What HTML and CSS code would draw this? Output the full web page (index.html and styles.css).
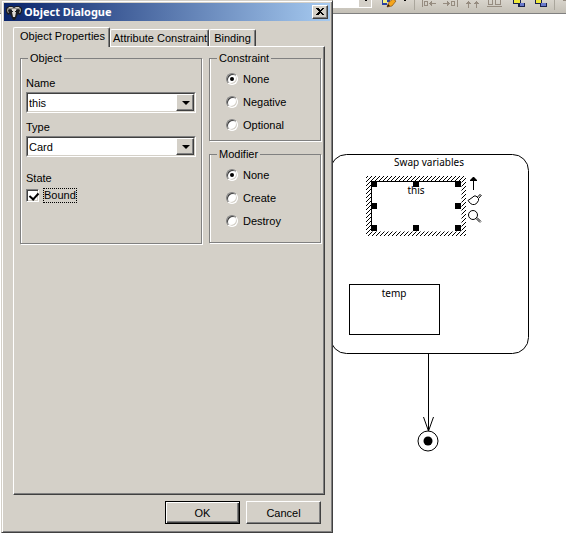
FILE: index.html
```html
<!DOCTYPE html>
<html lang="en">
<head>
<meta charset="utf-8">
<title>Object Dialogue</title>
<link rel="stylesheet" href="styles.css">
</head>
<body>
<main class="workspace">
  <div class="toolbar">
    <svg width="206" height="12" viewBox="0 0 206 12" aria-hidden="true" shape-rendering="crispEdges">
      <path d="M-30 0h42v8h-42z" fill="#fff"/><path d="M-1 0h12v7H-1z" fill="#d4d0c8"/><path d="M4 0h3l-1 1H5z"/>
      <path d="M22 0h8v2h-3v3h-5z" fill="#2840a0"/><path d="M23 0h4v3h-4z" fill="#f4f080"/>
      <g shape-rendering="auto"><path d="M27 7l2-5 4-3 3 2-4 5z" fill="#f5a51d" stroke="#70400a" stroke-width=".6"/><path d="M27 7l1-3 2 2z" fill="#301808"/></g>
      <path d="M43 0h3l-1 1h-1z"/>
      <path d="M54.500 0v10M194.500 0v10" stroke="#aaa69c"/>
      <g fill="none" stroke="#968c80">
        <path d="M62.500 0v7M64.500 1.500h3v4h-3zM69 3.500h7M71.500 1v5M70.500 2v3"/>
        <path d="M97.500 0v7M91.500 1.500h3v4h-3zM83 3.500h7M87.500 1v5M88.500 2v3"/>
        <path d="M108.500 1v7M106 3.500h5M107 2.500h3M116.500 1v7M114 3.500h5M115 2.500h3"/>
        <path d="M127 6.500h15M128.500 0v4h4v-4M135.500 0v4h5v-4"/>
      </g>
      <path d="M153 0h8v3h4v4h-7v-3h-5z" fill="#18204c"/><path d="M154 0h6v3h-6z" fill="#eee83c"/><path d="M160 3h4v3h-4z" fill="#6878cc"/>
      <path d="M175 0h7v3h5v4h-7v-3h-5z" fill="#18204c"/><path d="M176 0h5v3h-5z" fill="#eee83c"/><path d="M181 3h5v3h-5z" fill="#6878cc"/>
      <path d="M203 0h3v1h-3z" fill="#968c80"/>
    </svg>
  </div>

  <svg class="diagram" viewBox="0 0 566 533" width="566" height="533" role="img" aria-label="Activity diagram">
    <defs>
      <pattern id="hatch" width="4" height="4" patternUnits="userSpaceOnUse">
        <path d="M0 3h1v1H0zM1 2h1v1H1zM2 1h1v1H2zM3 0h1v1H3z" shape-rendering="crispEdges"/>
      </pattern>
    </defs>
    <rect x="330.500" y="154.500" width="198" height="199" rx="16" fill="#fff" stroke="#000"/>
    <text x="429" y="166">Swap variables</text>
    <rect x="366" y="176" width="100" height="60" fill="url(#hatch)"/>
    <rect x="371.500" y="181.500" width="90" height="50" fill="#fff"/>
    <path d="M371.500 231V181.500H461" fill="none" stroke="#000"/>
    <path d="M371 181h6v6h-6zM413 181h6v6h-6zM455 181h6v6h-6zM371 203h6v6h-6zM455 203h6v6h-6zM371 225h6v6h-6zM413 225h6v6h-6zM455 225h6v6h-6z"/>
    <text x="416" y="194">this</text>
    <path d="M473 190v-9h-3v-1l3-3h1l3 3v1h-3v9z"/>
    <g fill="none" stroke="#000">
      <path d="M468 200.500l5-3.500 1-1h2l2.500 2.500v2l-2 3-2 1h-2l-2-1zM477.500 197l3-3M479 198l2.500-3"/>
      <circle cx="473" cy="215" r="4.500"/><path d="M476 218.500l4 4M477 217.500l4 4"/>
    </g>
    <rect x="349.500" y="284.500" width="90" height="50" fill="none" stroke="#000"/>
    <text x="394" y="297">temp</text>
    <path d="M428.500 354v77M423.500 417l5 14 5-14" fill="none" stroke="#000"/>
    <circle cx="428" cy="441" r="10" fill="none" stroke="#000"/><circle cx="428" cy="441" r="4.500"/>
  </svg>

  <form class="dialog" aria-labelledby="dialog-title">
    <header class="titlebar">
      <svg width="16" height="16" viewBox="0 0 16 16" aria-hidden="true">
        <path d="M0 4l3-2h3l2 1 2-1h3l3 2v4l-2 3-2-1-2 4-1 2H7l-1-2-2-4-2 1-2-3z" fill="#1c1c20"/>
        <path d="M1 5l2-2h3l2 1 2-1h3l2 2v2l-1 2h-1l1-3-2-1-2 1-1 2H7L6 6 4 5 2 6l1 3H2L1 7z" fill="#96928c"/>
        <path d="M3 3h3l1 1H3zM10 3h3v1H9z" fill="#d0ccc4"/>
        <path d="M6 5h4v3l-1 5-1 1-1-1-1-5z" fill="#dedad4"/>
        <path d="M6 7h1v1H6zM9 7h1v1H9zM7 13h2v1H7z" fill="#222"/>
      </svg>
      <h1 id="dialog-title">Object Dialogue</h1>
      <button type="button" class="close" aria-label="Close">
        <svg width="8" height="7" viewBox="0 0 8 7" aria-hidden="true"><path d="M0 0h2l2 2 2-2h2L5 3.500 8 7H6L4 5 2 7H0l3-3.500z" shape-rendering="crispEdges"/></svg>
      </button>
    </header>
    <div class="tabs" role="tablist">
      <button type="button" role="tab" class="tab active" aria-selected="true">Object Properties</button>
      <button type="button" role="tab" class="tab" aria-selected="false">Attribute Constraint</button>
      <button type="button" role="tab" class="tab" aria-selected="false">Binding</button>
    </div>
    <div class="panel" role="tabpanel">
      <div class="groups">
        <fieldset class="group object">
          <legend>Object</legend>
          <label for="name">Name</label>
          <div class="combo">
            <select id="name"><option>this</option></select>
          </div>
          <label for="type">Type</label>
          <div class="combo">
            <select id="type"><option>Card</option></select>
          </div>
          <span class="state">State</span>
          <div class="check"><input type="checkbox" id="bound" checked><label for="bound">Bound</label></div>
        </fieldset>
        <div class="side">
          <fieldset class="group">
            <legend>Constraint</legend>
            <label class="choice"><input type="radio" name="constraint" checked>None</label>
            <label class="choice"><input type="radio" name="constraint">Negative</label>
            <label class="choice"><input type="radio" name="constraint">Optional</label>
          </fieldset>
          <fieldset class="group">
            <legend>Modifier</legend>
            <label class="choice"><input type="radio" name="modifier" checked>None</label>
            <label class="choice"><input type="radio" name="modifier">Create</label>
            <label class="choice"><input type="radio" name="modifier">Destroy</label>
          </fieldset>
        </div>
      </div>
    </div>
    <footer class="actions">
      <button type="button" class="push default">OK</button>
      <button type="button" class="push">Cancel</button>
    </footer>
  </form>
</main>
</body>
</html>
```
FILE: styles.css
```css
* { box-sizing: border-box; }

body {
  margin: 0;
  background: #fff;
  color: #000;
  font: 11px/14px "Liberation Sans", Arial, sans-serif;
}

button, select, input { font: inherit; color: inherit; margin: 0; }

.workspace {
  position: relative;
  min-height: 100vh;
  overflow: hidden;
}

.toolbar {
  display: flex;
  justify-content: flex-end;
  height: 14px;
  background: linear-gradient(#d8d4cc, #c4c0b6);
  border-bottom: 1px solid #808080;
}

.toolbar svg { display: block; overflow: visible; }

/* The drawing canvas continues underneath the dialog. */
.diagram {
  position: absolute;
  top: 0;
  left: 0;
}

.diagram text {
  font: 10px "Noto Sans", Verdana, sans-serif;
  text-anchor: middle;
}

.dialog {
  position: absolute;
  top: 0;
  left: 1px;
  width: 332px;
  min-height: 100vh;
  display: flex;
  flex-direction: column;
  padding: 2px 1px 1px 2px;
  background: #d4d0c8;
  border: 1px solid;
  border-color: #d4d0c8 #404040 #404040 #d4d0c8;
  box-shadow: inset 1px 1px #fff, inset -1px -1px #808080;
}

.titlebar {
  display: flex;
  align-items: center;
  height: 18px;
  margin-right: 1px;
  padding: 0 2px;
  background: linear-gradient(90deg, #0a246a, #a6caf0);
}

.titlebar h1 {
  flex: 1;
  margin: 0 0 0 2px;
  color: #fff;
  font: bold 11px/16px "Noto Sans", Tahoma, sans-serif;
}

.close, .push {
  background: #d4d0c8;
  border: 1px solid;
  border-color: #fff #404040 #404040 #fff;
  border-radius: 0;
  box-shadow: inset -1px -1px #808080;
}

.close {
  display: grid;
  place-items: center;
  width: 16px;
  height: 14px;
  padding: 0 1px 1px 0;
}

.tabs {
  display: flex;
  align-items: flex-end;
  height: 25px;
  margin-left: 9px;
}

.tab {
  height: 17px;
  padding: 0 1px 0 2px;
  background: #d4d0c8;
  border: 1px solid;
  border-color: #fff #404040 #d4d0c8 #fff;
  border-bottom: 0;
  border-radius: 2px 2px 0 0;
  box-shadow: inset -1px 0 #808080;
  white-space: nowrap;
}

.tab:last-child { padding: 0 4px; }

.tab.active {
  position: relative;
  height: 20px;
  margin-bottom: -1px;
  padding: 0 4px 3px 6px;
}

.panel {
  flex: 1;
  margin: 0 6px 0 9px;
  padding: 5px 3px 6px 6px;
  border: 1px solid;
  border-color: #fff #404040 #404040 #fff;
  box-shadow: inset -1px -1px #808080;
}

.groups {
  display: grid;
  grid-template-columns: 182fr 112fr;
  gap: 7px;
}

.group {
  min-width: 0;
  margin: 0;
  padding: 0 5px;
  border: 1px solid #808080;
  box-shadow: 1px 1px #fff, inset 1px 0 #fff;
}

.group legend {
  height: 12px;
  margin-left: 2px;
  padding: 0 2px;
  background: #d4d0c8;
  line-height: 12px;
}

.object {
  display: flex;
  flex-direction: column;
  height: 192px;
}

.object > label { display: block; margin-top: 12px; }
.object > .combo + label { margin-top: 7px; }

.combo {
  position: relative;
  margin-top: 2px;
  border: 1px solid;
  border-color: #808080 #fff #fff #808080;
}

.combo select {
  display: block;
  appearance: none;
  width: 100%;
  height: 19px;
  padding: 0 20px 0 1px;
  border: 1px solid;
  border-color: #404040 #d4d0c8 #d4d0c8 #404040;
  border-radius: 0;
  background: #fff;
}

.combo::before {
  content: "";
  position: absolute;
  top: 1px;
  right: 1px;
  bottom: 1px;
  width: 16px;
  background: #d4d0c8;
  border: 1px solid;
  border-color: #fff #404040 #404040 #fff;
  box-shadow: inset -1px -1px #808080;
  pointer-events: none;
}

.combo::after {
  content: "";
  position: absolute;
  top: 8px;
  right: 5px;
  border: solid transparent;
  border-width: 4px 4px 0;
  border-top-color: #000;
  pointer-events: none;
}

.state { margin-top: 14px; }

.check { display: flex; align-items: center; margin-top: 4px; gap: 5px; }

.check label { outline: 1px dotted #000; line-height: 13px; }

.check input {
  appearance: none;
  width: 13px;
  height: 13px;
  background: #fff;
  border: 1px solid;
  border-color: #808080 #fff #fff #808080;
  box-shadow: inset 1px 1px #404040, inset -1px -1px #d4d0c8;
}

.check input:checked::before {
  content: "";
  display: block;
  width: 4px;
  height: 7px;
  margin: 1px 0 0 4px;
  border: solid #000;
  border-width: 0 2px 2px 0;
  transform: rotate(42deg);
}

.side {
  display: flex;
  flex-direction: column;
  gap: 7px;
}

.side .group { height: 89px; }

.side .group + .group { height: 95px; }

.choice {
  display: flex;
  align-items: center;
  height: 23px;
  margin-left: 11px;
  gap: 5px;
}

.choice:first-of-type { margin-top: 3px; }

.choice input {
  appearance: none;
  display: grid;
  place-items: center;
  width: 12px;
  height: 12px;
  background: #fff;
  border: 1px solid;
  border-color: #808080 #fff #fff #808080;
  border-radius: 50%;
  box-shadow: inset 1px 1px #404040, inset -1px -1px #d4d0c8;
}

.choice input:checked::before {
  content: "";
  width: 4px;
  height: 4px;
  border-radius: 50%;
  background: #000;
}

.actions {
  display: flex;
  justify-content: flex-end;
  gap: 6px;
  padding: 6px 10px 7px;
}

.push {
  width: 75px;
  height: 23px;
  padding: 0;
}

.push.default {
  border-color: #000;
  box-shadow: inset 1px 1px #fff, inset -1px -1px #404040, inset -2px -2px #808080;
}
```
